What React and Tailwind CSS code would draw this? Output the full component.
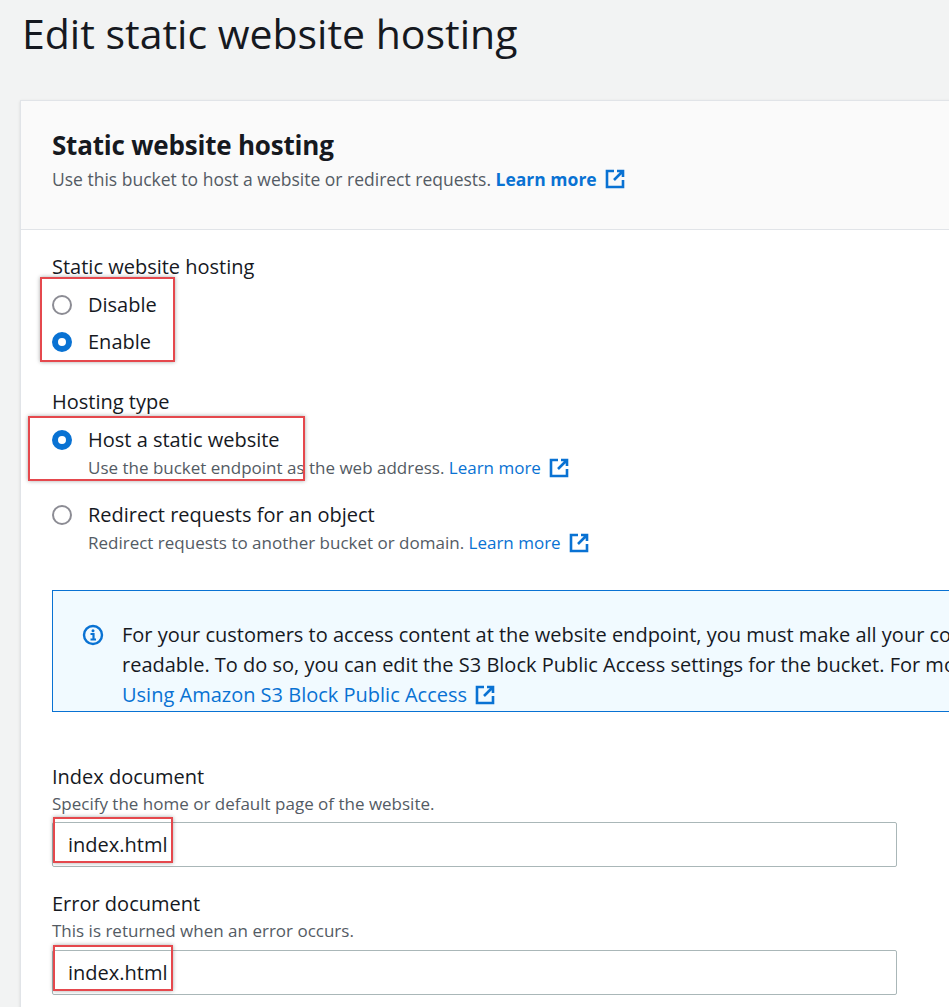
const F = { fontFamily: '"Open Sans", "Noto Sans", sans-serif' };

function Ext({ s = 20 }) {
  return (
    <svg width={s} height={s} viewBox="0 0 20 20" fill="none" stroke="#0972d3" strokeWidth="2.6" className="inline-block shrink-0">
      <path d="M9 2H2v16h16v-7" />
      <path d="M12 2h6v6M18 2l-9 9" />
    </svg>
  );
}

function Radio({ on }) {
  return on ? (
    <span className="block w-5 h-5 min-w-5 rounded-full border-[6px] border-[#0972d3] bg-white shrink-0" />
  ) : (
    <span className="block w-5 h-5 min-w-5 rounded-full border-2 border-[#8c8c94] bg-white shrink-0" />
  );
}

const Red = ({ c }) => (
  <div className={`absolute border-2 border-[#e5484d] shadow-[0_0_4px_rgba(0,0,0,0.35)] ${c}`} />
);

export default function App() {
  return (
    <div style={F} className="relative w-[949px] h-[1007px] overflow-hidden bg-[#f2f3f3] text-[#16191f]">
      <h1 className="pl-[22px] pt-[6px] text-[41px] leading-[54px] font-normal">Edit static website hosting</h1>
      <div className="ml-[20px] mt-[40px] w-[1100px] bg-white border border-[#e1e4e8] shadow-sm">
        <div className="bg-[#fafafa] border-b border-[#e1e4e8] pl-[31px] pt-[26px] pb-[36px]">
          <div className="text-[26px] font-bold leading-[36px] tracking-[-0.2px]">Static website hosting</div>
          <div className="mt-[2px] text-[17.5px] text-[#545b64] leading-[28px] flex items-center gap-2">
            <span>Use this bucket to host a website or redirect requests. <b className="text-[#0972d3]">Learn more</b></span>
            <Ext />
          </div>
        </div>
        <div className="pl-[31px] pt-[22px]">
          <div className="text-[20px] leading-[30px]">Static website hosting</div>
          <div className="mt-[4px] flex items-center gap-4 h-[37px] text-[20px]"><Radio /> Disable</div>
          <div className="flex items-center gap-4 h-[37px] text-[20px]"><Radio on /> Enable</div>
          <div className="text-[20px] leading-[30px] mt-[27px]">Hosting type</div>
          <div className="mt-[9px] flex gap-4">
            <div className="pt-[4px]"><Radio on /></div>
            <div>
              <div className="text-[20px] leading-[28px]">Host a static website</div>
              <div className="text-[17px] text-[#545b64] leading-[28px] flex items-center gap-2">
                <span>Use the bucket endpoint as the web address. <span className="text-[#0972d3]">Learn more</span></span><Ext />
              </div>
            </div>
          </div>
          <div className="mt-[19px] flex gap-4">
            <div className="pt-[4px]"><Radio /></div>
            <div>
              <div className="text-[20px] leading-[28px]">Redirect requests for an object</div>
              <div className="text-[17px] text-[#545b64] leading-[28px] flex items-center gap-2">
                <span>Redirect requests to another bucket or domain. <span className="text-[#0972d3]">Learn more</span></span><Ext />
              </div>
            </div>
          </div>
          <div className="mt-[33px] w-[1000px] bg-[#f1faff] border border-[#0972d3] pl-[29px] pt-[29px] pb-[1px] flex gap-[18px]">
            <svg width="22" height="22" viewBox="0 0 22 22" className="mt-[4px] shrink-0">
              <circle cx="11" cy="11" r="9" fill="none" stroke="#0972d3" strokeWidth="2.4" />
              <circle cx="11" cy="6.8" r="1.5" fill="#0972d3" />
              <path d="M8.5 10h3v5.5M8.5 15.5h5.5" stroke="#0972d3" strokeWidth="2.2" fill="none" />
            </svg>
            <div className="text-[20px] leading-[30px] whitespace-nowrap">
              <div>For your customers to access content at the website endpoint, you must make all your content publicly</div>
              <div>readable. To do so, you can edit the S3 Block Public Access settings for the bucket. For more information, see</div>
              <div className="flex items-center gap-2 text-[#0972d3]">Using Amazon S3 Block Public Access <Ext /></div>
            </div>
          </div>
          <div className="mt-[50px] text-[20px] leading-[30px]">Index document</div>
          <div className="text-[17px] text-[#545b64] leading-[24px]">Specify the home or default page of the website.</div>
          <div className="mt-[6px] w-[845px] h-[45px] border border-[#aab7b8] rounded-[2px] px-[15px] flex items-center text-[20px]">index.html</div>
          <div className="mt-[22px] text-[20px] leading-[30px]">Error document</div>
          <div className="text-[17px] text-[#545b64] leading-[24px]">This is returned when an error occurs.</div>
          <div className="mt-[7px] w-[845px] h-[45px] border border-[#aab7b8] rounded-[2px] px-[15px] flex items-center text-[20px]">index.html</div>
          <div className="h-20" />
        </div>
      </div>
      <Red c="left-[40px] top-[277px] w-[135px] h-[85px]" />
      <Red c="left-[28px] top-[416px] w-[277px] h-[65px]" />
      <Red c="left-[53px] top-[817px] w-[120px] h-[46px]" />
      <Red c="left-[53px] top-[945px] w-[120px] h-[46px]" />
    </div>
  );
}
